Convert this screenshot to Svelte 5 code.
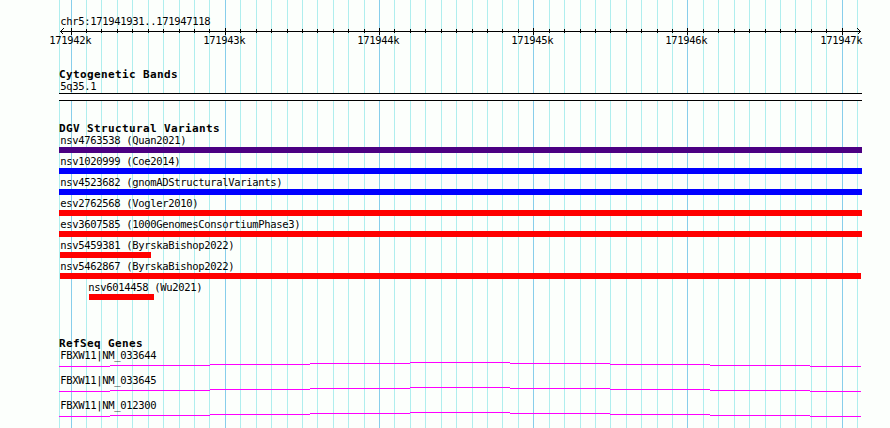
<script>
  const start = 59;
  const end = 862;

  /* grid lines, one every 100 bp, a darker one every 1000 bp */
  let gridLines = [{ x: start, major: false }];
  for (let i = 0; i <= 51; i++) {
    gridLines.push({ x: Math.floor(71.15 + 15.42 * i), major: i % 10 === 0 });
  }
  const ticks = gridLines.slice(1, -1);
  const majorTicks = ticks.filter((tick) => tick.major);

  const palette = { complex: "#4b0082", gain: "#0000ff", loss: "#ff0000" };

  const variants = [
    { name: "nsv4763538 (Quan2021)", type: "complex", from: 59, to: 862 },
    { name: "nsv1020999 (Coe2014)", type: "gain", from: 59, to: 862 },
    { name: "nsv4523682 (gnomADStructuralVariants)", type: "gain", from: 59, to: 862 },
    { name: "esv2762568 (Vogler2010)", type: "loss", from: 59, to: 862 },
    { name: "esv3607585 (1000GenomesConsortiumPhase3)", type: "loss", from: 59, to: 862 },
    { name: "nsv5459381 (ByrskaBishop2022)", type: "loss", from: 60, to: 151 },
    { name: "nsv5462867 (ByrskaBishop2022)", type: "loss", from: 60, to: 861 },
    { name: "nsv6014458 (Wu2021)", type: "loss", from: 89, to: 154 },
  ];

  const genes = ["FBXW11|NM_033644", "FBXW11|NM_033645", "FBXW11|NM_012300"];

  /* the intron line climbs to the middle and comes down again */
  const edges = [59, 110, 210, 310, 410, 510, 610, 710, 810, 861];
  const steps = edges.slice(0, -1).map((x, i) => ({
    x: x - start,
    width: edges[i + 1] - x,
    y: Math.abs(4 - i),
  }));
</script>

<main>
  <svg class="grid" width="890" height="428">
    {#each gridLines as line}
      <rect class:major={line.major} x={line.x} y="0" width="1" height="428" />
    {/each}
  </svg>

  <header>
    <div class="region">chr5:171941931..171947118</div>
    <svg class="ruler" width="890" height="20">
      <rect x="60" y="3" width="801" height="1" />
      <path d="M63.5 0.5L60.5 3.5L63.5 6.5M857.5 0.5L860.5 3.5L857.5 6.5" />
      {#each ticks as tick}
        <rect x={tick.x} y={tick.major ? 0 : 1} width="1" height={tick.major ? 7 : 4} />
      {/each}
      {#each majorTicks as tick, i}
        <text x={tick.x - 21.7} y="16">{171942 + i}k</text>
      {/each}
    </svg>
  </header>

  <section class="cytoband">
    <h2>Cytogenetic Bands</h2>
    <div class="label">5q35.1</div>
    <div class="band"></div>
  </section>

  <section class="variants">
    <h2>DGV Structural Variants</h2>
    {#each variants as variant}
      <div class="variant" style="margin-left: {variant.from - start}px">
        <div class="label" class:tight={variant.from === 60} class:inner={variant.from > 60}>
          {variant.name}
        </div>
        <div
          class="bar"
          style="width: {variant.to - variant.from}px; background: {palette[variant.type]}"
        ></div>
      </div>
    {/each}
  </section>

  <section class="genes">
    <h2>RefSeq Genes</h2>
    {#each genes as gene}
      <div class="gene">
        <div class="label">{gene}</div>
        <svg class="intron" width={end - start} height="5">
          {#each steps as step}
            <rect x={step.x} y={step.y} width={step.width} height="1" />
          {/each}
        </svg>
      </div>
    {/each}
  </section>
</main>

<style>
  :global(body) {
    margin: 0;
    background: #fcfffc;
  }
  main {
    position: relative;
    width: 890px;
    height: 428px;
    overflow: hidden;
    color: #000;
    font-family: "DejaVu Sans Mono", monospace;
    font-size: 10.5px;
    line-height: 13px;
    letter-spacing: -0.321px;
    white-space: nowrap;
  }
  svg {
    display: block;
    shape-rendering: crispEdges;
  }
  .grid {
    position: absolute;
    top: 0;
    left: 0;
    z-index: -1;
    fill: #afeeee;
  }
  .grid .major {
    fill: #87ceeb;
  }

  header {
    padding-top: 15px;
  }
  .region {
    padding-left: 60.3px;
  }
  .ruler path {
    fill: none;
    stroke: #000;
  }

  section {
    width: 803px;
    padding-left: 59px;
  }
  h2 {
    height: 12px;
    margin: 0;
    font-size: 11px;
    font-weight: bold;
    letter-spacing: 0.378px;
  }
  .label {
    height: 13px;
    padding-left: 1.3px;
  }
  .label.tight {
    padding-left: 0.3px;
  }
  .label.inner {
    margin-left: -1px;
    padding-left: 0.3px;
  }

  .cytoband {
    padding-top: 20px;
  }
  .band {
    height: 6px;
    border-top: 1px solid #000;
    border-bottom: 1px solid #000;
    background: #fff;
  }

  .variants {
    padding-top: 21px;
  }
  .variant {
    height: 21px;
  }
  .bar {
    height: 6px;
  }

  .genes {
    padding-top: 35px;
  }
  .gene {
    height: 25px;
  }
  .intron {
    fill: #ff00ff;
  }
</style>
